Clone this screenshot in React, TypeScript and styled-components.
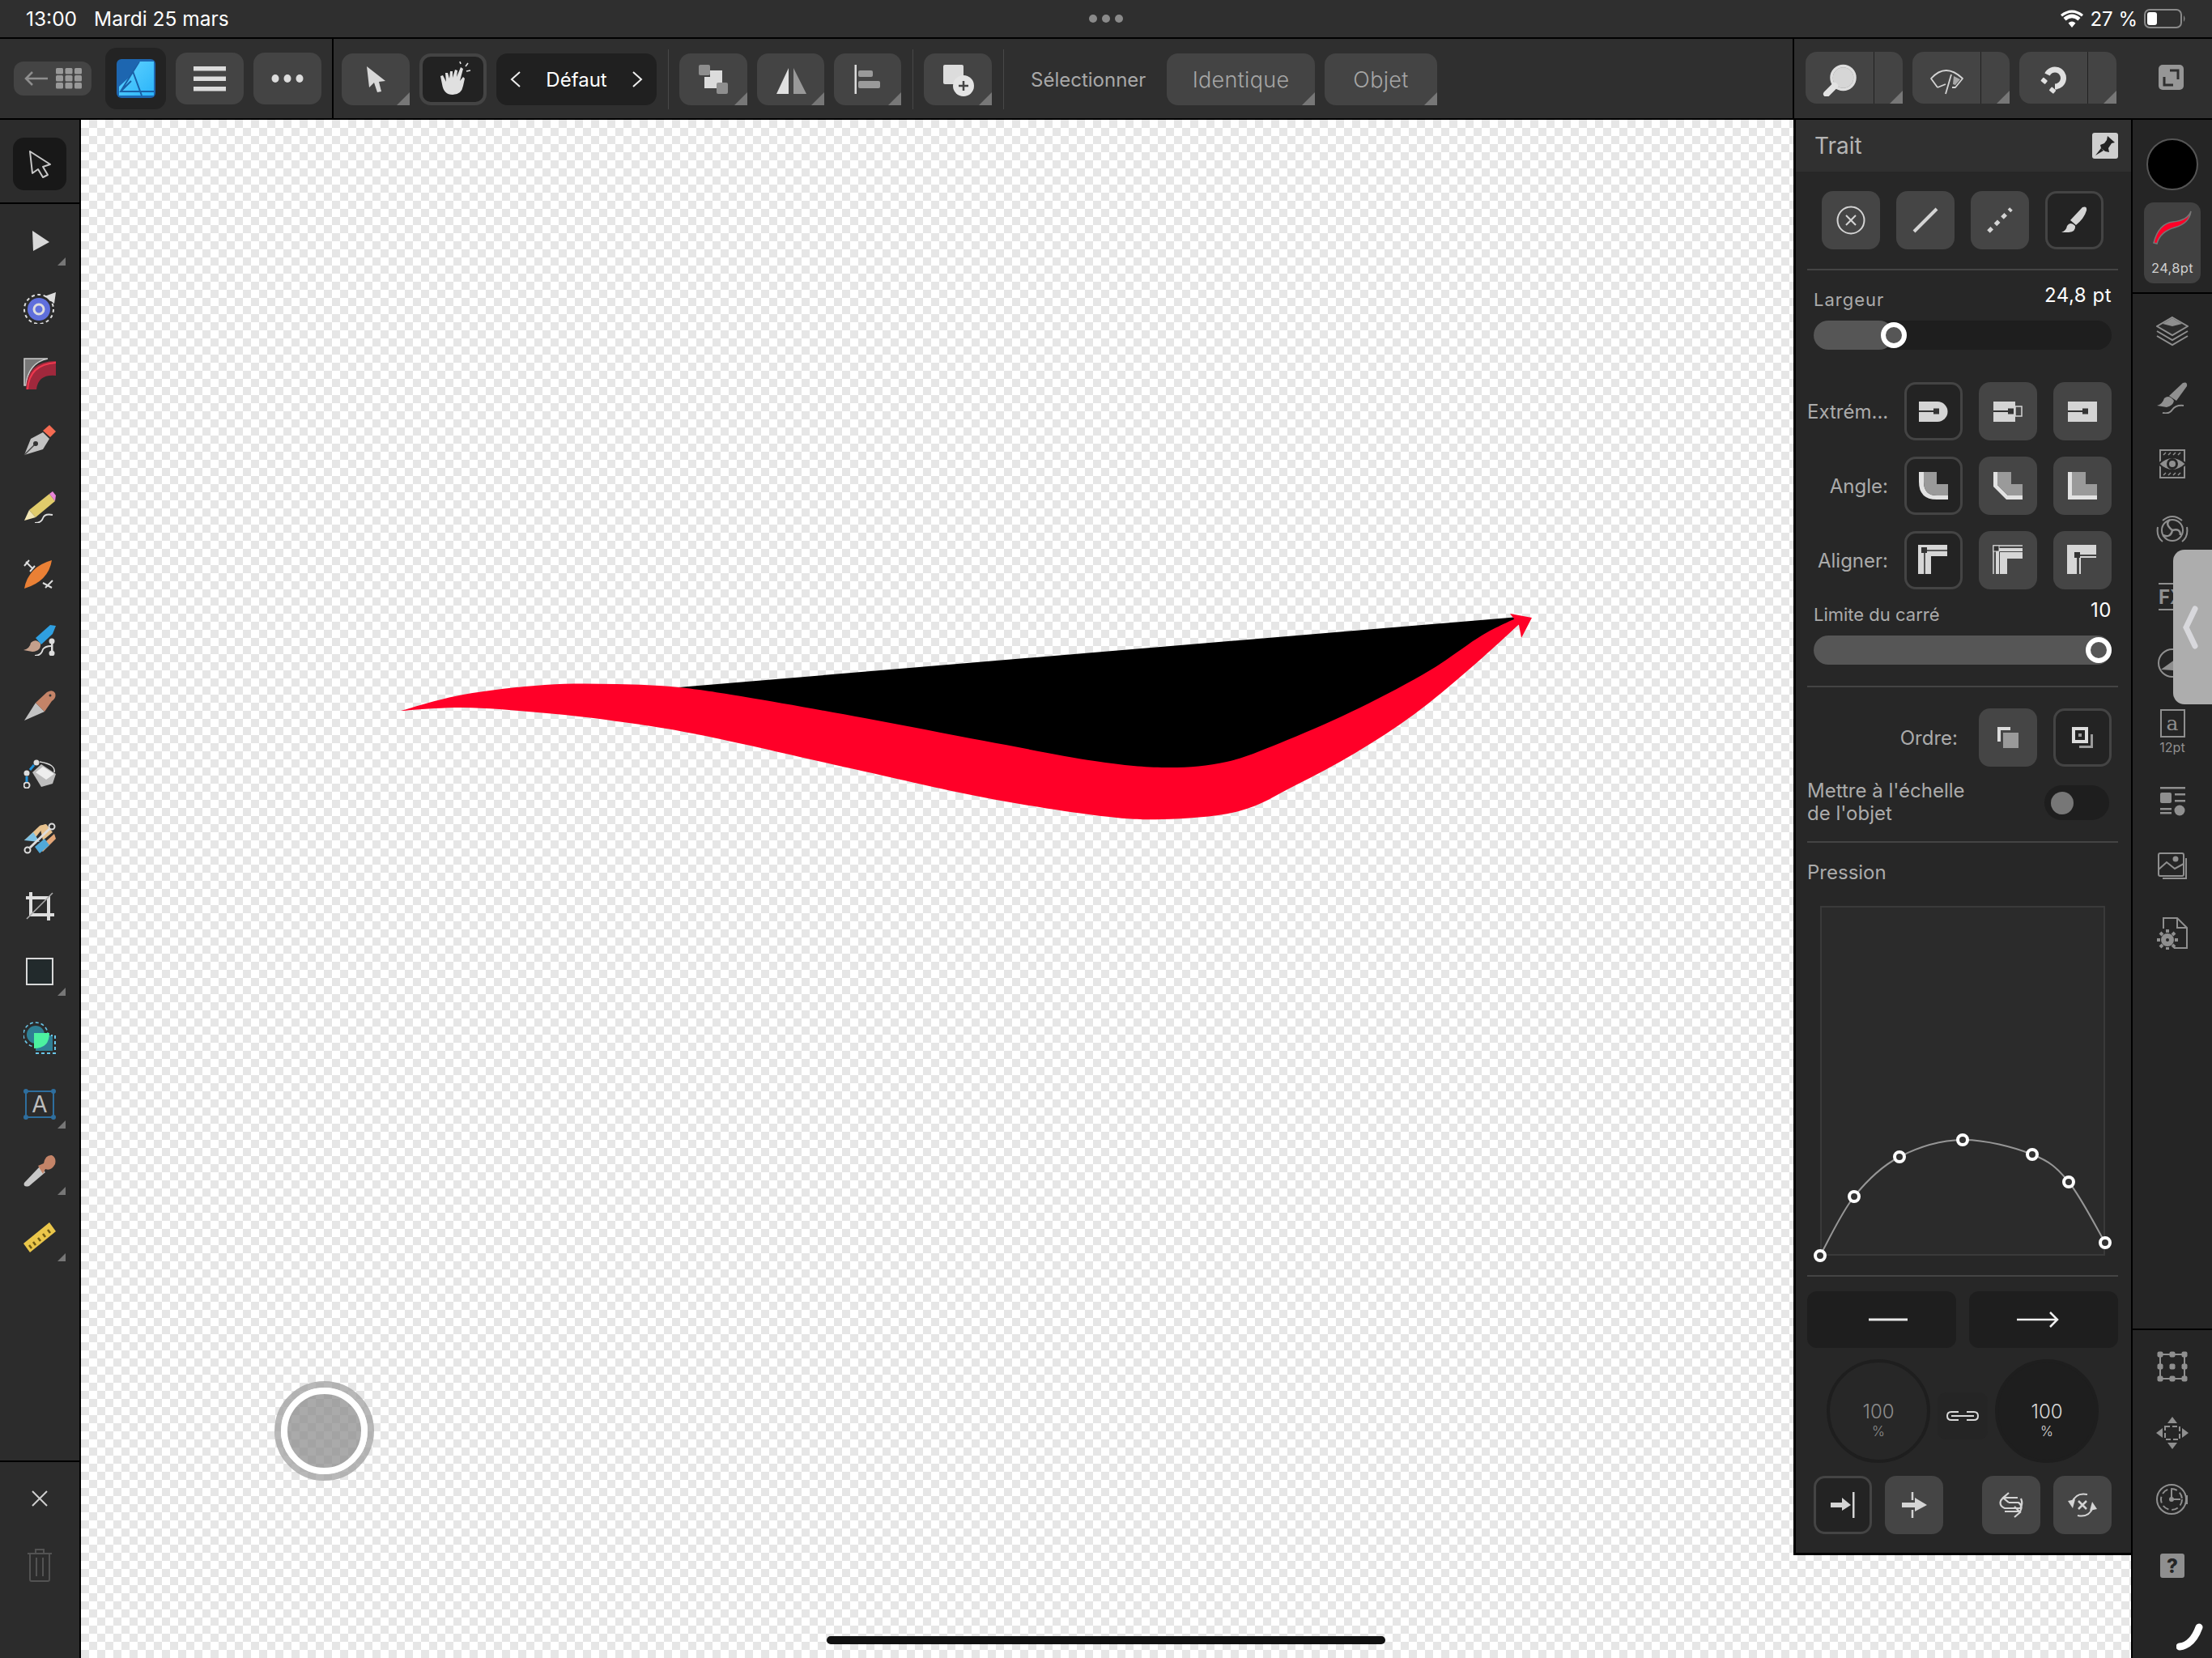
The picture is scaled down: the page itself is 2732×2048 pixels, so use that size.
import React from "react";
import styled, { createGlobalStyle } from "styled-components";

const GlobalStyle = createGlobalStyle`
  html, body { margin: 0; padding: 0; background: #000; }
  * { box-sizing: border-box; }
  button { font: inherit; color: inherit; border: none; padding: 0; }
`;

const Screen = styled.div`
  position: relative;
  width: 2732px;
  height: 2048px;
  overflow: hidden;
  display: flex;
  flex-direction: column;
  font-family: Inter, "Noto Sans", "Liberation Sans", sans-serif;
  color: #fff;
`;

/* status bar */
const StatusBar = styled.div`
  height: 48px;
  flex: none;
  display: grid;
  grid-template-columns: 1fr auto 1fr;
  align-items: center;
  padding: 0 32px;
  background: #2f2f2f;
  border-bottom: 2px solid #000;
  font-size: 24.5px;
`;
const StatusLeft = styled.div`
  display: flex;
  gap: 21px;
`;
const StatusRight = styled.div`
  display: flex;
  align-items: center;
  justify-content: flex-end;
  gap: 8px;
  font-size: 24px;
`;
const Dots = styled.div`
  display: flex;
  gap: 6px;
`;
const Dot = styled.span`
  width: 10px;
  height: 10px;
  border-radius: 50%;
  background: #8a8a8a;
`;

/* toolbar */
const Toolbar = styled.div`
  height: 100px;
  flex: none;
  display: flex;
  background: #2f2f2f;
  border-bottom: 2px solid #000;
`;
const LeadGroup = styled.div`
  width: 412px;
  flex: none;
  display: flex;
  align-items: center;
  padding-left: 17px;
  gap: 12px;
  border-right: 2px solid #000;
`;
const MainGroup = styled.div`
  flex: 1;
  display: flex;
  align-items: center;
  gap: 12px;
  padding: 2px 0 0 10px;
`;
const ViewGroup = styled.div`
  width: 518px;
  flex: none;
  display: flex;
  align-items: center;
  gap: 12px;
  padding: 0 0 2px 14px;
  border-left: 2px solid #000;
`;
const BackPill = styled.div`
  width: 96px;
  height: 42px;
  margin-right: 5px;
  border-radius: 12px;
  background: #444;
  display: flex;
  align-items: center;
  justify-content: center;
  gap: 10px;
`;
const LogoTile = styled.div`
  width: 75px;
  height: 76px;
  border-radius: 14px;
  background: #232323;
  display: flex;
  align-items: center;
  justify-content: center;
`;
const ToolButton = styled.button<{ $w?: number; $selected?: boolean; $more?: boolean }>`
  position: relative;
  width: ${(p) => p.$w ?? 84}px;
  height: 64px;
  flex: none;
  border-radius: ${(p) => (p.$more ? "14px 14px 0 14px" : "14px")};
  background: ${(p) => (p.$selected ? "#222" : "#444")};
  border: ${(p) => (p.$selected ? "4px solid #444" : "none")};
  display: flex;
  align-items: center;
  justify-content: center;
  font-size: 27px;
  font-weight: 300;
  letter-spacing: 0.3px;
  color: #a6a6a6;
  ${(p) =>
    p.$more &&
    `&::after {
      content: "";
      position: absolute;
      right: 0;
      bottom: 0;
      width: 16px;
      height: 16px;
      background: #777;
      clip-path: polygon(100% 0, 100% 100%, 0 100%);
    }`}
`;
const PresetButton = styled.div`
  width: 198px;
  height: 64px;
  flex: none;
  border-radius: 14px;
  background: #202020;
  display: flex;
  align-items: center;
  justify-content: space-between;
  padding: 0 17px;
  font-size: 24px;
`;
const ToolSep = styled.span`
  width: 1px;
  height: 74px;
  margin: 0 1px 0 2px;
  background: #484848;
`;
const ToolLabel = styled.span`
  width: 156px;
  margin: 0 0 0 20px;
  font-size: 24px;
  color: #a8a8a8;
`;
const SplitButton = styled.div`
  position: relative;
  width: 120px;
  height: 64px;
  flex: none;
  display: grid;
  grid-template-columns: 85px 1fr;
  border-radius: 14px 14px 0 14px;
  background: #444;
  &::after {
    content: "";
    position: absolute;
    right: 0;
    bottom: 0;
    width: 16px;
    height: 16px;
    background: #777;
    clip-path: polygon(100% 0, 100% 100%, 0 100%);
  }
`;
const SplitFace = styled.div`
  display: flex;
  align-items: center;
  justify-content: center;
  border-right: 1px solid #222;
`;
const ExpandSlot = styled.div`
  margin-left: 40px;
`;

/* main area */
const Main = styled.div`
  flex: 1;
  display: flex;
  min-height: 0;
`;
const LeftBar = styled.aside`
  width: 100px;
  flex: none;
  display: flex;
  flex-direction: column;
  background: #2c2c2c;
  border-right: 2px solid #000;
`;
const SelectSlot = styled.div`
  height: 104px;
  flex: none;
  padding-top: 22px;
  border-bottom: 2px solid #000;
  display: flex;
  justify-content: center;
  align-items: flex-start;
`;
const SelectTile = styled.div`
  width: 66px;
  height: 65px;
  border-radius: 14px;
  background: #181818;
  display: flex;
  align-items: center;
  justify-content: center;
`;
const ToolList = styled.div`
  flex: 1;
  padding-top: 5px;
`;
const ToolRow = styled.div<{ $more?: boolean }>`
  position: relative;
  height: 82px;
  display: flex;
  align-items: center;
  justify-content: center;
  ${(p) =>
    p.$more &&
    `&::after {
      content: "";
      position: absolute;
      left: 71px;
      top: 61px;
      width: 10px;
      height: 10px;
      background: #777;
      clip-path: polygon(100% 0, 100% 100%, 0 100%);
    }`}
`;
const LeftFooter = styled.div`
  height: 244px;
  flex: none;
  padding-top: 4px;
  border-top: 2px solid #000;
`;

const Canvas = styled.main`
  position: relative;
  flex: 1;
  background: conic-gradient(#e6e6e6 25%, #fff 0 50%, #e6e6e6 0 75%, #fff 0) 0 0 / 20px 20px;
`;
const Artwork = styled.svg`
  position: absolute;
  left: 0;
  top: 0;
  width: 100%;
  height: 100%;
`;
const RecordButton = styled.div`
  position: absolute;
  left: 239px;
  top: 1558px;
  width: 123px;
  height: 123px;
  border-radius: 50%;
  border: 8px solid rgba(160, 160, 160, 0.75);
  display: flex;
  &::before {
    content: "";
    flex: 1;
    border-radius: 50%;
    border: 8px solid #fff;
    background: rgba(137, 137, 137, 0.72);
  }
`;

/* stroke panel */
const Panel = styled.section`
  position: absolute;
  right: 0;
  top: 0;
  width: 417px;
  height: 1773px;
  border-left: 3px solid #000;
  border-bottom: 3px solid #000;
  background: #272727;
  display: flex;
  flex-direction: column;
`;
const PanelHead = styled.header`
  height: 64px;
  flex: none;
  display: flex;
  align-items: center;
  justify-content: space-between;
  padding: 0 16px 0 23px;
  background: #303030;
  font-size: 28px;
  color: #b4b4b4;
`;
const PinTile = styled.div`
  width: 32px;
  height: 32px;
  border-radius: 3px;
  background: #cfcfcf;
  display: flex;
  align-items: center;
  justify-content: center;
`;
const PanelBody = styled.div`
  flex: 1;
  padding: 24px 16px 0 14px;
  display: flex;
  flex-direction: column;
`;
const StyleRow = styled.div`
  display: flex;
  justify-content: center;
  gap: 20px;
`;
const PanelButton = styled.button<{ $active?: boolean }>`
  width: 72px;
  height: 72px;
  flex: none;
  border-radius: 14px;
  background: ${(p) => (p.$active ? "#232323" : "#454545")};
  border: ${(p) => (p.$active ? "3px solid #444" : "none")};
  display: flex;
  align-items: center;
  justify-content: center;
  color: #d4d4d4;
`;
const Rule = styled.hr<{ $top: number }>`
  width: 100%;
  height: 2px;
  margin: ${(p) => p.$top}px 0 0;
  border: none;
  flex: none;
  background: #444;
`;
const SliderHead = styled.div<{ $top: number }>`
  margin-top: ${(p) => p.$top}px;
  height: 46px;
  padding: 0 8px;
  display: flex;
  justify-content: space-between;
  align-items: flex-start;
`;
const FieldLabel = styled.span<{ $track?: number }>`
  font-size: 22px;
  line-height: 40px;
  color: #ababab;
  letter-spacing: ${(p) => p.$track ?? 0}px;
`;
const FieldValue = styled.span`
  font-size: 24px;
  line-height: 30px;
  color: #fff;
  letter-spacing: 0.5px;
`;
const Slider = styled.div`
  position: relative;
  height: 36px;
  margin: 0 8px;
  flex: none;
  border-radius: 18px;
  background: #1e1e1e;
`;
const SliderFill = styled.div`
  height: 100%;
  border-radius: 18px;
  background: #565656;
`;
const SliderThumb = styled.div`
  position: absolute;
  top: 2px;
  width: 32px;
  height: 32px;
  margin-left: -16px;
  border-radius: 50%;
  border: 6px solid #fff;
  background: #565656;
`;
const OptionRow = styled.div<{ $top: number }>`
  margin-top: ${(p) => p.$top}px;
  padding-right: 8px;
  display: grid;
  grid-template-columns: minmax(0, 1fr) repeat(3, 72px);
  column-gap: 20px;
  align-items: center;
`;
const OrderRow = styled(OptionRow)`
  grid-template-columns: minmax(0, 1fr) repeat(2, 72px);
`;
const OptionLabel = styled.span<{ $nudge?: number }>`
  font-size: 24px;
  text-align: right;
  white-space: nowrap;
  color: #ababab;
  margin-right: ${(p) => p.$nudge ?? 0}px;
`;
const ScaleRow = styled.div`
  margin-top: 16px;
  height: 56px;
  padding-right: 11px;
  display: flex;
  align-items: center;
  justify-content: space-between;
`;
const ScaleLabel = styled.span`
  font-size: 24px;
  line-height: 28px;
  color: #ababab;
`;
const Toggle = styled.div`
  width: 80px;
  height: 43px;
  padding: 8px;
  border-radius: 22px;
  background: #1e1e1e;
  &::before {
    content: "";
    display: block;
    width: 28px;
    height: 28px;
    border-radius: 50%;
    background: #777;
  }
`;
const SectionTitle = styled.div`
  margin-top: 22px;
  font-size: 24px;
  line-height: 30px;
  color: #ababab;
`;
const Graph = styled.svg`
  display: block;
  flex: none;
  width: 384px;
  height: 450px;
  margin-top: 16px;
`;
const LineEnds = styled.div`
  margin-top: 18px;
  display: grid;
  grid-template-columns: 1fr 1fr;
  gap: 16px;
`;
const LineEnd = styled.div<{ $shift: number }>`
  height: 70px;
  border-radius: 12px;
  background: #1e1e1e;
  display: flex;
  align-items: center;
  justify-content: center;
  padding-left: ${(p) => (p.$shift > 0 ? p.$shift : 0)}px;
  padding-right: ${(p) => (p.$shift < 0 ? -p.$shift : 0)}px;
`;
const ScaleDials = styled.div`
  margin-top: 14px;
  padding-left: 24px;
  display: flex;
  align-items: center;
  gap: 9px;
`;
const Dial = styled.div<{ $filled?: boolean }>`
  width: 128px;
  height: 128px;
  padding-top: 24px;
  border-radius: 50%;
  border: 4px solid #1e1e1e;
  background: ${(p) => (p.$filled ? "#1e1e1e" : "transparent")};
  color: ${(p) => (p.$filled ? "#d8d8d8" : "#8c8c8c")};
  display: flex;
  flex-direction: column;
  align-items: center;
  justify-content: center;
  font-size: 24px;
  font-weight: 300;
  line-height: 26px;
`;
const DialUnit = styled.span`
  font-size: 17px;
  line-height: 22px;
`;
const LinkTile = styled.div`
  width: 62px;
  height: 58px;
  margin-top: 12px;
  border-radius: 10px;
  background: #252525;
  display: flex;
  align-items: center;
  justify-content: center;
`;
const CapActions = styled.div`
  margin-top: 16px;
  padding: 0 8px;
  display: flex;
  justify-content: space-between;
`;
const CapPair = styled.div`
  display: flex;
  gap: 16px;
`;

/* right rail */
const Rail = styled.aside`
  width: 100px;
  flex: none;
  display: flex;
  flex-direction: column;
  background: #252525;
  border-left: 2px solid #000;
`;
const RailTop = styled.div`
  height: 215px;
  flex: none;
  padding-top: 23px;
  display: flex;
  flex-direction: column;
  align-items: center;
  gap: 15px;
  border-bottom: 2px solid #000;
`;
const Swatch = styled.div`
  width: 64px;
  height: 64px;
  border-radius: 50%;
  background: #000;
  border: 2px solid #555;
`;
const StrokeCard = styled.div`
  width: 70px;
  height: 100px;
  border-radius: 12px;
  background: #414141;
  display: flex;
  flex-direction: column;
  align-items: center;
  padding-top: 10px;
  font-size: 16.5px;
  letter-spacing: 0.3px;
  line-height: 20px;
  color: #d0d0d0;
  gap: 19px;
`;
const RailList = styled.div`
  flex: 1;
  padding-top: 5px;
`;
const RailRow = styled.div<{ $tall?: boolean }>`
  height: ${(p) => (p.$tall ? 88 : 82)}px;
  display: flex;
  flex-direction: column;
  align-items: center;
  justify-content: center;
  color: #8f8f8f;
`;
const LetterBox = styled.div`
  width: 31px;
  height: 35px;
  border: 2px solid #8f8f8f;
  display: flex;
  align-items: center;
  justify-content: center;
  font-family: "DejaVu Serif", "Liberation Serif", serif;
  font-size: 25px;
  line-height: 1;
`;
const LetterSize = styled.span`
  margin-top: 2px;
  font-size: 16px;
  line-height: 20px;
`;
const RailFooter = styled.div`
  height: 407px;
  flex: none;
  padding-top: 4px;
  border-top: 2px solid #000;
`;

/* things lying over the page */
const SideTab = styled.div`
  position: absolute;
  right: 0;
  top: 679px;
  width: 48px;
  height: 191px;
  border-radius: 14px 0 0 14px;
  background: #adadad;
  display: flex;
  align-items: center;
  padding-left: 12px;
`;
const HomeBar = styled.div`
  position: absolute;
  left: 1021px;
  bottom: 17px;
  width: 690px;
  height: 10px;
  border-radius: 5px;
  background: #111;
`;
const PencilMark = styled.svg`
  position: absolute;
  right: 8px;
  bottom: 8px;
  width: 36px;
  height: 36px;
`;

const Glyph = styled.svg<{ $s?: number; $h?: number }>`
  display: block;
  flex: none;
  width: ${(p) => p.$s ?? 40}px;
  height: ${(p) => p.$h ?? p.$s ?? 40}px;
`;

// catmull-rom through the sampled points, for the stroke and the pressure curve
type Pt = [number, number];
function smooth(points: Pt[], move = true) {
  let d = move ? `M${points[0][0]} ${points[0][1]}` : `L${points[0][0]} ${points[0][1]}`;
  for (let i = 0; i < points.length - 1; i++) {
    const p0 = points[Math.max(i - 1, 0)];
    const p1 = points[i];
    const p2 = points[i + 1];
    const p3 = points[Math.min(i + 2, points.length - 1)];
    const c1 = [p1[0] + (p2[0] - p0[0]) / 6, p1[1] + (p2[1] - p0[1]) / 6];
    const c2 = [p2[0] - (p3[0] - p1[0]) / 6, p2[1] - (p3[1] - p1[1]) / 6];
    d += `C${c1[0].toFixed(1)} ${c1[1].toFixed(1)} ${c2[0].toFixed(1)} ${c2[1].toFixed(1)} ${p2[0]} ${p2[1]}`;
  }
  return d;
}

const strokeTop: Pt[] = [
  [495, 878], [572, 858], [673, 846], [760, 845], [838, 849], [921, 861], [1068, 887], [1215, 915],
  [1352, 940], [1440, 948], [1515, 941], [1590, 914], [1680, 874], [1766, 828], [1830, 785], [1876, 762],
];
const strokeBottom: Pt[] = [
  [1885, 763], [1820, 822], [1747, 882], [1674, 930], [1600, 970], [1530, 1002], [1435, 1012], [1352, 1007],
  [1215, 985], [1068, 953], [866, 908], [755, 890], [664, 880], [572, 874], [495, 878],
];
const pressure: Pt[] = [
  [2248, 1552], [2290, 1479], [2346, 1430], [2424, 1409], [2510, 1427], [2555, 1461], [2600, 1536],
];

function AffinityLogo() {
  return (
    <Glyph $s={48} viewBox="0 0 48 48">
      <defs>
        <linearGradient id="aff" x1="0" y1="0" x2="1" y2="1">
          <stop offset="0" stopColor="#62d4ff" />
          <stop offset="1" stopColor="#2ab4fa" />
        </linearGradient>
      </defs>
      <rect width="48" height="48" rx="6" fill="#1d66b0" />
      <path d="M27 3H46V45H3V34L16 22Z" fill="url(#aff)" />
      <path d="M28 3L5 40H46M20 15L31 45M5 40L18 27" fill="none" stroke="#1a5fa6" strokeWidth="2" />
    </Glyph>
  );
}

const leftTools: { more?: boolean; icon: React.ReactNode }[] = [
  {
    more: true,
    icon: <path d="M11 7L32 21 12 32Z" fill="#d8d8d8" />,
  },
  {
    icon: (
      <>
        <circle cx="19" cy="22" r="14" fill="#5f6fdc" />
        <circle cx="19" cy="22" r="6" fill="none" stroke="#ddd" strokeWidth="3" />
        <circle cx="19" cy="22" r="18" fill="none" stroke="#ddd" strokeWidth="2" strokeDasharray="4 3.5" />
        <path d="M26 6L40 1 38 15Z" fill="#ddd" />
      </>
    ),
  },
  {
    icon: (
      <>
        <path d="M1 1H30Q6 6 3 34H1Z" fill="#777" stroke="#ccc" strokeWidth="1.5" />
        <path d="M3 39Q4 4 40 4V22Q18 20 16 39Z" fill="#a0283c" />
        <path d="M5 39Q7 8 40 6" fill="none" stroke="#f0394f" strokeWidth="2" />
      </>
    ),
  },
  {
    icon: (
      <>
        <path d="M24 8L32 1 40 9 33 16Z" fill="#f56b52" />
        <path d="M1 38L9 18 24 10 32 18 24 31Z" fill="#c2c2c2" />
        <path d="M1 38L15 24" stroke="#444" strokeWidth="1.5" />
        <circle cx="15" cy="24" r="3" fill="#333" />
      </>
    ),
  },
  {
    icon: (
      <>
        <path d="M7 24L32 4 39 13 15 33Z" fill="#e0cb6b" />
        <path d="M32 4L36 1 40 6 39 13Z" fill="#e884d8" />
        <path d="M1 37L7 24 15 33Z" fill="#f2e6b4" />
        <path d="M14 40Q22 40 24 34T36 30" fill="none" stroke="#ddd" strokeWidth="1.8" />
      </>
    ),
  },
  {
    icon: (
      <>
        <path d="M1 39Q6 12 35 4 31 30 1 39Z" fill="#ea8035" />
        <path d="M3 6L12 15M1 11L7 4M8 18L14 11M27 38L36 29M24 32L35 38" stroke="#ddd" strokeWidth="2" />
      </>
    ),
  },
  {
    icon: (
      <>
        <path d="M15 18L33 2 40 3 36 13 22 26Z" fill="#2f9fe0" />
        <path d="M0 33Q8 31 9 24 15 18 21 25 22 34 11 35Z" fill="#c4a08c" />
        <path d="M14 40Q22 40 24 32 27 28 34 28" fill="none" stroke="#ddd" strokeWidth="1.8" />
        <circle cx="35" cy="22" r="3.5" fill="#ddd" />
        <circle cx="35" cy="37" r="3.5" fill="#ddd" />
        <rect x="34" y="22" width="2.5" height="15" fill="#ddd" />
      </>
    ),
  },
  {
    icon: (
      <>
        <path d="M1 38L15 16 26 27Z" fill="#c2c2c2" />
        <path d="M15 16L29 3Q36 -1 39 4 41 10 35 14L26 27Z" fill="#c48468" />
        <circle cx="33" cy="7" r="1.5" fill="#333" />
      </>
    ),
  },
  {
    icon: (
      <>
        <path d="M11 20L22 10 40 22 36 34 22 38Z" fill="#bdbdbd" />
        <path d="M15 20L24 13 38 22 28 29Z" fill="#eee" />
        <circle cx="16" cy="8" r="3.5" fill="#ddd" />
        <circle cx="4" cy="21" r="3.5" fill="#ddd" />
        <circle cx="4" cy="36" r="3.5" fill="none" stroke="#ddd" strokeWidth="2" />
        <path d="M8 17L13 11M4 25V32" stroke="#2090d8" strokeWidth="3" />
        <path d="M20 7Q40 10 38 20" fill="none" stroke="#ddd" strokeWidth="1.5" />
      </>
    ),
  },
  {
    icon: (
      <>
        <path d="M1 22L20 4 28 2 20 12 12 22Z" fill="#e7c28e" />
        <path d="M1 22L12 12 20 24Z" fill="#7ec2e4" />
        <path d="M20 4L28 2 36 12 24 22Z" fill="#e7c28e" />
        <path d="M18 32L38 14 40 20 24 36Z" fill="#e2a678" />
        <path d="M14 30L26 20 32 28 20 38Z" fill="#50a8d8" />
        <path d="M8 31L32 8" stroke="#ddd" strokeWidth="3" />
        <circle cx="5" cy="34" r="3.5" fill="#2c2c2c" stroke="#ddd" strokeWidth="2" />
        <circle cx="35" cy="5" r="3.5" fill="#2c2c2c" stroke="#ddd" strokeWidth="2" />
      </>
    ),
  },
  {
    icon: (
      <>
        <path d="M3 11H31V39M9 4V32H38" fill="none" stroke="#dedede" strokeWidth="4" />
        <path d="M4 37L36 5" stroke="#aaa" strokeWidth="1.6" />
      </>
    ),
  },
  {
    more: true,
    icon: <rect x="4" y="4" width="32" height="32" fill="#222a2c" stroke="#d8d8d8" strokeWidth="2" />,
  },
  {
    icon: (
      <>
        <circle cx="15" cy="16" r="11" fill="#2f7f94" />
        <circle cx="15" cy="16" r="15" fill="none" stroke="#69c6e8" strokeWidth="1.6" strokeDasharray="4 3" />
        <rect x="15" y="17" width="21" height="19" fill="#2f7f94" />
        <path d="M15 39H39V17H34" fill="none" stroke="#69c6e8" strokeWidth="2" strokeDasharray="4 3" />
        <path d="M13 14H32Q32 33 13 33Z" fill="#4cf2a0" />
      </>
    ),
  },
  {
    more: true,
    icon: (
      <>
        <rect x="3" y="4" width="34" height="32" fill="none" stroke="#2e6e9e" strokeWidth="2" />
        <circle cx="3" cy="4" r="3" fill="#2e6e9e" />
        <circle cx="37" cy="4" r="3" fill="#2e6e9e" />
        <circle cx="3" cy="36" r="3" fill="#2e6e9e" />
        <circle cx="37" cy="36" r="3" fill="#2e6e9e" />
        <text x="20" y="30" textAnchor="middle" fontSize="28" fill="#bdbdbd" fontFamily="Inter, sans-serif">
          A
        </text>
      </>
    ),
  },
  {
    more: true,
    icon: (
      <>
        <path d="M1 35L20 15 27 22 7 39Q-1 41 1 35Z" fill="#c8c8c8" />
        <path d="M18 14L25 11Q27 0 35 1 41 4 39 12 34 21 27 18L24 24Z" fill="#c48468" />
      </>
    ),
  },
  {
    more: true,
    icon: (
      <>
        <path d="M0 28L32 2 40 13 8 39Z" fill="#eac64a" />
        <path d="M7 30L10 34M12 26L15 30M18 21L21 25M24 16L27 20M30 11L33 15" stroke="#6e5a14" strokeWidth="2.5" />
      </>
    ),
  },
];

const railIcons: React.ReactNode[] = [
  <g fill="none" stroke="currentColor" strokeWidth="2" key="layers">
    <path d="M20 3L39 14 20 25 1 14Z" fill="#2c2c2c" />
    <path d="M8 11L20 4 32 11 20 14Z" fill="currentColor" stroke="none" />
    <path d="M1 20L20 31 39 20M1 26L20 37 39 26" />
  </g>,
  <g fill="currentColor" key="brush">
    <path d="M16 18L33 2Q39 0 38 6L25 24Z" />
    <path d="M1 30Q8 28 10 21 16 16 22 24 21 30 13 32Z" />
    <path d="M8 39Q16 41 20 35T34 30" fill="none" stroke="currentColor" strokeWidth="2" />
  </g>,
  <g fill="none" stroke="currentColor" strokeWidth="2" key="eye">
    <rect x="5" y="3" width="30" height="34" />
    <path d="M3 20Q20 4 37 20 20 36 3 20Z" fill="currentColor" stroke="#252525" />
    <circle cx="20" cy="20" r="7" fill="#252525" stroke="none" />
    <circle cx="20" cy="20" r="4" fill="currentColor" stroke="none" />
    <path d="M9 9l3-3M15 9l3-3M21 9l3-3M27 9l3-3M9 34l3-3M15 34l3-3M21 34l3-3M27 34l3-3" strokeWidth="1.5" />
  </g>,
  <g fill="none" stroke="currentColor" strokeWidth="2" key="aperture">
    <circle cx="20" cy="20" r="13" />
    <path d="M20 20Q10 12 17 7M20 20Q30 17 30 26M20 20Q18 30 8 26" strokeWidth="2.5" />
    <path d="M8 8Q20 -2 32 8M38 16Q40 28 32 34M8 34Q0 28 2 16" />
  </g>,
  <g fill="none" stroke="currentColor" strokeWidth="2" key="fx">
    <path d="M3 4H38M3 36H38" />
    <text x="3" y="29" fontSize="24" fontWeight="700" fill="currentColor" stroke="none" fontFamily="Inter, sans-serif">
      FX
    </text>
  </g>,
  <g key="adjust">
    <circle cx="20" cy="20" r="17" fill="none" stroke="currentColor" strokeWidth="2" />
    <path d="M6 28L34 8V30Z" fill="currentColor" />
  </g>,
];

const railIconsLower: React.ReactNode[] = [
  <g fill="currentColor" key="styles">
    <rect x="5" y="3" width="31" height="2.5" />
    <rect x="5" y="10" width="14" height="13" rx="2" />
    <rect x="23" y="11" width="13" height="2.5" />
    <rect x="23" y="19" width="13" height="2.5" />
    <rect x="5" y="29" width="14" height="2.5" />
    <rect x="5" y="34" width="14" height="2.5" />
    <circle cx="29" cy="32" r="6.5" />
  </g>,
  <g fill="none" stroke="currentColor" strokeWidth="2" key="picture">
    <rect x="3" y="3" width="31" height="28" rx="2" />
    <path d="M37 9V34H8" />
    <path d="M3 23L13 14 23 22 34 16" />
    <circle cx="24" cy="10" r="3.5" fill="currentColor" stroke="none" />
  </g>,
  <g fill="none" stroke="currentColor" strokeWidth="2" key="doc">
    <path d="M9 14V1H26L38 13V38H22M26 1V13H38" />
    <circle cx="14" cy="28" r="5" strokeWidth="6" />
    <path d="M14 15V19M14 37V41M1 28H5M23 28H27M5 19L8 22M23 19L20 22M5 37L8 34M23 37L20 34" strokeWidth="4" />
  </g>,
];

const railFoot: React.ReactNode[] = [
  <g key="box" fill="currentColor">
    <rect x="5" y="5" width="30" height="30" fill="none" stroke="currentColor" strokeWidth="2" />
    {[5, 20, 35].map((x) =>
      [5, 20, 35].map((y) => <rect key={`${x}-${y}`} x={x - 3.5} y={y - 3.5} width="7" height="7" rx="2" />)
    )}
  </g>,
  <g key="move" fill="currentColor">
    <path d="M20 0L26 8H14ZM20 40L14 32H26ZM0 20L8 14V26ZM40 20L32 26V14Z" />
    <rect x="11" y="12" width="18" height="16" fill="none" stroke="currentColor" strokeWidth="2" strokeDasharray="6 3" />
  </g>,
  <g key="clock" fill="none" stroke="currentColor" strokeWidth="2">
    <circle cx="19" cy="20" r="18" />
    <circle cx="19" cy="20" r="13" strokeDasharray="8 4" />
    <path d="M19 8V20H30" />
    <circle cx="19" cy="20" r="3" fill="currentColor" stroke="none" />
    <rect x="36" y="15" width="3" height="11" fill="currentColor" stroke="none" />
  </g>,
  <g key="help">
    <rect x="5" y="5" width="30" height="30" rx="3" fill="currentColor" />
    <text x="20" y="29" textAnchor="middle" fontSize="24" fontWeight="800" fill="#252525" fontFamily="Inter, sans-serif">
      ?
    </text>
  </g>,
];

function CapIcon({ kind }: { kind: "round" | "square" | "butt" }) {
  return (
    <Glyph $s={36} $h={25} viewBox="0 0 36 25">
      {kind === "round" && <path d="M0 0H23a12.5 12.5 0 0 1 0 25H0Z" fill="#d4d4d4" />}
      {kind === "square" && (
        <>
          <rect width="27" height="25" fill="#d4d4d4" />
          <rect x="27" y="6" width="8" height="12" fill="none" stroke="#d4d4d4" strokeWidth="1.5" />
        </>
      )}
      {kind === "butt" && <rect width="36" height="25" fill="#d4d4d4" />}
      <rect y="11" width="20" height="2" fill="#333" />
      <rect x="18" y="8.5" width="7" height="7" fill="#333" />
    </Glyph>
  );
}

function JoinIcon({ kind }: { kind: "round" | "bevel" | "miter" }) {
  const parts = {
    round: ["M0 0H6V12Q6 29 22 29H36V34H22Q0 34 0 12Z", "M6 0H22V15H36V29H22Q6 29 6 12Z"],
    bevel: ["M0 0H5V16L18 29H36V34H16L0 18Z", "M5 0H22V15H36V29H18L5 16Z"],
    miter: ["M0 0H5V29H36V34H0Z", "M5 0H22V15H36V29H5Z"],
  }[kind];
  return (
    <Glyph $s={36} $h={34} viewBox="0 0 36 34">
      <path d={parts[0]} fill="#e2e2e2" />
      <path d={parts[1]} fill="#9a9a9a" />
    </Glyph>
  );
}

function AlignIcon({ kind }: { kind: "center" | "inside" | "outside" }) {
  return (
    <Glyph $s={38} viewBox="0 0 38 38">
      {kind === "center" && (
        <>
          <path d="M0 36V0H36V14H16V36Z" fill="#d6d6d6" />
          <path d="M8 36V7H36" fill="none" stroke="#333" strokeWidth="1.6" />
          <rect x="4" y="3" width="7" height="7" fill="#333" />
        </>
      )}
      {kind === "inside" && (
        <>
          <path d="M1 36V1H37" fill="none" stroke="#d6d6d6" strokeWidth="1.5" />
          <path d="M4 36V4H37V8H8V36Z" fill="#d6d6d6" />
          <path d="M9 36V9H37V17H18V36Z" fill="#d6d6d6" />
          <rect x="1" y="1" width="7" height="7" fill="#333" stroke="#d6d6d6" strokeWidth="1" />
        </>
      )}
      {kind === "outside" && (
        <>
          <path d="M0 36V0H36V12H12V36Z" fill="#d6d6d6" />
          <path d="M16 36V15H36" fill="none" stroke="#d6d6d6" strokeWidth="2" />
          <rect x="9" y="9" width="7" height="7" fill="#333" />
        </>
      )}
    </Glyph>
  );
}

export default function App() {
  return (
    <Screen>
      <GlobalStyle />
      <StatusBar>
        <StatusLeft>
          <span>13:00</span>
          <span>Mardi 25 mars</span>
        </StatusLeft>
        <Dots>
          <Dot />
          <Dot />
          <Dot />
        </Dots>
        <StatusRight>
          <Glyph $s={28} $h={22} viewBox="0 0 28 22">
            <path d="M14 22L9.5 16.5Q14 12.5 18.5 16.5ZM6.5 13.5L3.5 10Q14 1 24.5 10L21.5 13.5Q14 7 6.5 13.5ZM2 8.5L0 6Q14 -5 28 6L26 8.5Q14 -1 2 8.5Z" fill="#fff" />
          </Glyph>
          <span>27 %</span>
          <Glyph $s={52} $h={24} viewBox="0 0 52 24">
            <rect x="1" y="1" width="45" height="22" rx="6" fill="none" stroke="#8a8a8a" strokeWidth="2" />
            <rect x="4" y="4" width="12" height="16" rx="3" fill="#fff" />
            <path d="M49 8Q52 12 49 16Z" fill="#8a8a8a" />
          </Glyph>
        </StatusRight>
      </StatusBar>

      <Toolbar>
        <LeadGroup>
          <BackPill>
            <Glyph $s={29} $h={18} viewBox="0 0 29 18">
              <path d="M29 9H2M10 1L2 9l8 8" fill="none" stroke="#8e8e8e" strokeWidth="2.5" />
            </Glyph>
            <Glyph $s={32} $h={26} viewBox="0 0 32 26" fill="#999">
              {[0, 11.5, 23].map((x) =>
                [0, 9, 18].map((y) => <rect key={`${x}-${y}`} x={x} y={y} width="9" height="7.5" rx="1.5" />)
              )}
            </Glyph>
          </BackPill>
          <LogoTile>
            <AffinityLogo />
          </LogoTile>
          <ToolButton>
            <Glyph $s={42} viewBox="0 0 42 42" fill="#dcdcdc">
              <rect x="1" y="6" width="40" height="5.5" />
              <rect x="1" y="18.5" width="40" height="5.5" />
              <rect x="1" y="31" width="40" height="5.5" />
            </Glyph>
          </ToolButton>
          <ToolButton>
            <Glyph $s={42} viewBox="0 0 42 42" fill="#dcdcdc">
              <ellipse cx="6" cy="21" rx="4.5" ry="5" />
              <ellipse cx="21" cy="21" rx="4.5" ry="5" />
              <ellipse cx="36" cy="21" rx="4.5" ry="5" />
            </Glyph>
          </ToolButton>
        </LeadGroup>

        <MainGroup>
          <ToolButton $more>
            <Glyph $s={34} viewBox="0 0 34 34">
              <path d="M6 1L29 19 21 20 24 32 19 33 15 21 9 27Z" fill="#d8d8d8" />
            </Glyph>
          </ToolButton>
          <ToolButton $w={83} $selected>
            <Glyph $s={44} viewBox="0 0 44 44">
              <path d="M6 18L8 28Q10 41 21 41 32 41 34 30L36 21 34 19 30 24 34 9 31 7 26 19 27 11 24 10 21 20 21 12 18 12 17 21 15 14 12 14 13 25 9 17Z" fill="#e0e0e0" />
              <path d="M31 3L30 0M37 6L40 2M38 12L43 11" stroke="#e0e0e0" strokeWidth="1.6" />
            </Glyph>
          </ToolButton>
          <PresetButton>
            <Glyph $s={14} $h={20} viewBox="0 0 14 20">
              <path d="M12 1L2 10l10 9" fill="none" stroke="#eee" strokeWidth="2" />
            </Glyph>
            <span>Défaut</span>
            <Glyph $s={14} $h={20} viewBox="0 0 14 20">
              <path d="M2 1l10 9-10 9" fill="none" stroke="#eee" strokeWidth="2" />
            </Glyph>
          </PresetButton>
          <ToolSep />
          <ToolButton $more>
            <Glyph $s={44} viewBox="0 0 44 44">
              <rect x="4" y="4" width="14" height="13" rx="2" fill="#8e8e8e" />
              <path d="M18 11H33V28H26V33H11V19H18Z" fill="#dcdcdc" />
              <rect x="26" y="26" width="14" height="14" rx="2" fill="#8e8e8e" />
            </Glyph>
          </ToolButton>
          <ToolButton $w={83} $more>
            <Glyph $s={44} viewBox="0 0 44 44">
              <path d="M4 40L19 8V40Z" fill="#e0e0e0" />
              <path d="M25 8L41 40H25Z" fill="#999" />
            </Glyph>
          </ToolButton>
          <ToolButton $w={83} $more>
            <Glyph $s={44} viewBox="0 0 44 44">
              <rect x="5.5" y="4" width="2.5" height="36" fill="#dcdcdc" />
              <rect x="10" y="11" width="18" height="8" rx="2" fill="#9a9a9a" />
              <rect x="10" y="24" width="27" height="9" rx="2" fill="#9a9a9a" />
            </Glyph>
          </ToolButton>
          <ToolSep />
          <ToolButton $more>
            <Glyph $s={44} viewBox="0 0 44 44">
              <rect x="4" y="4" width="25" height="24" rx="2" fill="#dcdcdc" />
              <circle cx="29" cy="30" r="13" fill="#e4e4e4" />
              <path d="M29 24V36M23 30H35" stroke="#444" strokeWidth="2.5" />
            </Glyph>
          </ToolButton>
          <ToolSep />
          <ToolLabel>Sélectionner</ToolLabel>
          <ToolButton $w={183} $more>
            Identique
          </ToolButton>
          <ToolButton $w={139} $more>
            Objet
          </ToolButton>
        </MainGroup>

        <ViewGroup>
          <SplitButton>
            <SplitFace>
              <Glyph $s={46} viewBox="0 0 46 46">
                <circle cx="27.5" cy="23" r="13.5" fill="#d6d6d6" stroke="#777" strokeWidth="1.5" />
                <circle cx="27.5" cy="23" r="14.5" fill="none" stroke="#dedede" strokeWidth="3.5" />
                <path d="M17 33L7 43" stroke="#e2e2e2" strokeWidth="8" strokeLinecap="round" />
              </Glyph>
            </SplitFace>
          </SplitButton>
          <SplitButton>
            <SplitFace>
              <Glyph $s={44} viewBox="0 0 44 44">
                <path d="M11 34L3 23Q21 3 42 23L33 34H29M11 34L21 30" fill="none" stroke="#d4d4d4" strokeWidth="1.8" strokeLinejoin="round" />
                <path d="M28 18L21 42" stroke="#d4d4d4" strokeWidth="1.8" />
                <path d="M31 20L39 24 33 31 30 30Z" fill="#a8a8a8" />
              </Glyph>
            </SplitFace>
          </SplitButton>
          <SplitButton>
            <SplitFace>
              <Glyph $s={44} viewBox="0 0 44 44">
                <path d="M14.5 18A10.5 10.5 0 1 1 24 33" fill="none" stroke="#e0e0e0" strokeWidth="7" />
                <rect x="7" y="23" width="7" height="5.5" rx="1" fill="#e0e0e0" transform="rotate(40 10.5 26)" />
                <rect x="18" y="35" width="7" height="5.5" rx="1" fill="#e0e0e0" transform="rotate(40 21.5 37)" />
              </Glyph>
            </SplitFace>
          </SplitButton>
          <ExpandSlot>
            <Glyph $s={32} viewBox="0 0 32 32">
              <rect width="31" height="31" rx="5" fill="#969696" />
              <path d="M14 7H24V18M7 15V25H18" fill="none" stroke="#2f2f2f" strokeWidth="3" />
            </Glyph>
          </ExpandSlot>
        </ViewGroup>
      </Toolbar>

      <Main>
        <LeftBar>
          <SelectSlot>
            <SelectTile>
              <Glyph $s={40} viewBox="0 0 40 40">
                <path d="M8 4L33 20 24 23 30 33 24 36 18 26 11 31Z" fill="#1b1b1b" stroke="#c8c8c8" strokeWidth="2" strokeLinejoin="round" />
              </Glyph>
            </SelectTile>
          </SelectSlot>
          <ToolList>
            {leftTools.map((tool, i) => (
              <ToolRow key={i} $more={tool.more}>
                <Glyph viewBox="0 0 40 40">{tool.icon}</Glyph>
              </ToolRow>
            ))}
          </ToolList>
          <LeftFooter>
            <ToolRow>
              <Glyph $s={22} viewBox="0 0 22 22">
                <path d="M2 2L20 20M20 2L2 20" stroke="#cfcfcf" strokeWidth="2" />
              </Glyph>
            </ToolRow>
            <ToolRow>
              <Glyph $s={32} $h={42} viewBox="0 0 32 42">
                <path d="M1 7H31M11 6V2H21V6M4 8V39Q4 41 6 41H26Q28 41 28 39V8M12 12V35M20 12V35" fill="none" stroke="#525252" strokeWidth="2" />
              </Glyph>
            </ToolRow>
          </LeftFooter>
        </LeftBar>

        <Canvas>
          <Artwork viewBox="100 148 2532 1900">
            <path d="M838 849L1876 762L1800 825L1674 905L1500 970L1352 975L1215 950L1068 920L921 880Z" fill="#000" />
            <path d={`${smooth(strokeTop)}${smooth(strokeBottom, false)}Z`} fill="#ff0028" />
            <path d="M1865 758L1892 763 1879 788 1876 772Z" fill="#ff0028" />
          </Artwork>
          <RecordButton />
          <Panel>
            <PanelHead>
              <span>Trait</span>
              <PinTile>
                <Glyph $s={26} viewBox="0 0 26 26">
                  <path d="M16 1L25 9 21 10 17 16 18 21 13 20 8 16 7 12 12 10 15 6ZM8 16L1 25 11 19Z" fill="#222" />
                </Glyph>
              </PinTile>
            </PanelHead>
            <PanelBody>
              <StyleRow>
                <PanelButton>
                  <Glyph $s={36} viewBox="0 0 36 36">
                    <circle cx="18" cy="18" r="16.5" fill="none" stroke="#d4d4d4" strokeWidth="2" />
                    <path d="M12 12L24 24M24 12L12 24" stroke="#d4d4d4" strokeWidth="2" />
                  </Glyph>
                </PanelButton>
                <PanelButton>
                  <Glyph $s={32} viewBox="0 0 32 32">
                    <path d="M2 30L30 2" stroke="#d4d4d4" strokeWidth="4" />
                  </Glyph>
                </PanelButton>
                <PanelButton>
                  <Glyph $s={32} viewBox="0 0 32 32">
                    <path d="M2 30L30 2" stroke="#d4d4d4" strokeWidth="5" strokeDasharray="6 6" />
                  </Glyph>
                </PanelButton>
                <PanelButton $active>
                  <Glyph $s={34} viewBox="0 0 34 34">
                    <path d="M12 17L27 1Q33 -1 32 5 29 15 19 23Z" fill="#d4d4d4" />
                    <path d="M1 32Q7 30 8 24 12 18 18 24 19 31 10 32Z" fill="#d4d4d4" />
                  </Glyph>
                </PanelButton>
              </StyleRow>
              <Rule $top={24} />
              <SliderHead $top={16}>
                <FieldLabel $track={1}>Largeur</FieldLabel>
                <FieldValue>24,8 pt</FieldValue>
              </SliderHead>
              <Slider>
                <SliderFill style={{ width: "27%" }} />
                <SliderThumb style={{ left: "27%" }} />
              </Slider>
              <OptionRow $top={40}>
                <OptionLabel>Extrém...</OptionLabel>
                <PanelButton $active>
                  <CapIcon kind="round" />
                </PanelButton>
                <PanelButton>
                  <CapIcon kind="square" />
                </PanelButton>
                <PanelButton>
                  <CapIcon kind="butt" />
                </PanelButton>
              </OptionRow>
              <OptionRow $top={20}>
                <OptionLabel>Angle:</OptionLabel>
                <PanelButton $active>
                  <JoinIcon kind="round" />
                </PanelButton>
                <PanelButton>
                  <JoinIcon kind="bevel" />
                </PanelButton>
                <PanelButton>
                  <JoinIcon kind="miter" />
                </PanelButton>
              </OptionRow>
              <OptionRow $top={20}>
                <OptionLabel>Aligner:</OptionLabel>
                <PanelButton $active>
                  <AlignIcon kind="center" />
                </PanelButton>
                <PanelButton>
                  <AlignIcon kind="inside" />
                </PanelButton>
                <PanelButton>
                  <AlignIcon kind="outside" />
                </PanelButton>
              </OptionRow>
              <SliderHead $top={11}>
                <FieldLabel>Limite du carré</FieldLabel>
                <FieldValue>10</FieldValue>
              </SliderHead>
              <Slider>
                <SliderFill style={{ width: "100%" }} />
                <SliderThumb style={{ left: "95.6%" }} />
              </Slider>
              <Rule $top={26} />
              <OrderRow $top={26}>
                <OptionLabel $nudge={6}>Ordre:</OptionLabel>
                <PanelButton>
                  <Glyph $s={28} viewBox="0 0 28 28">
                    <path d="M1 1H17V5H5V19H1Z" fill="#dcdcdc" />
                    <rect x="8" y="8" width="19" height="19" fill="#9a9a9a" />
                  </Glyph>
                </PanelButton>
                <PanelButton $active>
                  <Glyph $s={28} viewBox="0 0 28 28">
                    <path d="M24 10H27V27H10V24H24Z" fill="#9a9a9a" />
                    <rect x="3" y="3" width="16" height="16" fill="none" stroke="#dcdcdc" strokeWidth="4" />
                    <rect x="9" y="9" width="4" height="4" fill="#9a9a9a" />
                  </Glyph>
                </PanelButton>
              </OrderRow>
              <ScaleRow>
                <ScaleLabel>
                  Mettre à l'échelle
                  <br />
                  de l'objet
                </ScaleLabel>
                <Toggle />
              </ScaleRow>
              <Rule $top={20} />
              <SectionTitle>Pression</SectionTitle>
              <Graph viewBox="2232 1110 384 450">
                <rect x="2249" y="1121" width="350" height="430" fill="#2b2b2b" stroke="#3a3a3a" strokeWidth="2" />
                <path d={smooth(pressure)} fill="none" stroke="#969696" strokeWidth="2" />
                {pressure.map(([x, y]) => (
                  <circle key={x} cx={x} cy={y} r="6" fill="#333" stroke="#fff" strokeWidth="4" />
                ))}
              </Graph>
              <Rule $top={16} />
              <LineEnds>
                <LineEnd $shift={16}>
                  <Glyph $s={48} $h={20} viewBox="0 0 48 20">
                    <path d="M0 10H48" stroke="#e8e8e8" strokeWidth="3" />
                  </Glyph>
                </LineEnd>
                <LineEnd $shift={-14}>
                  <Glyph $s={52} $h={20} viewBox="0 0 52 20">
                    <path d="M0 10H50M41 1l9 9-9 9" fill="none" stroke="#f0f0f0" strokeWidth="2.5" />
                  </Glyph>
                </LineEnd>
              </LineEnds>
              <ScaleDials>
                <Dial>
                  100
                  <DialUnit>%</DialUnit>
                </Dial>
                <LinkTile>
                  <Glyph $s={40} $h={14} viewBox="0 0 40 14">
                    <path d="M15 2H6Q1 2 1 7T6 12H15M25 2H34Q39 2 39 7T34 12H25M6 7H34" fill="none" stroke="#d8d8d8" strokeWidth="2" />
                  </Glyph>
                </LinkTile>
                <Dial $filled>
                  100
                  <DialUnit>%</DialUnit>
                </Dial>
              </ScaleDials>
              <CapActions>
                <CapPair>
                  <PanelButton $active>
                    <Glyph $s={32} viewBox="0 0 32 32">
                      <path d="M1 13H15V7L26 16 15 23V19H1Z" fill="#d4d4d4" />
                      <rect x="28" y="0" width="2.5" height="32" fill="#d4d4d4" />
                    </Glyph>
                  </PanelButton>
                  <PanelButton>
                    <Glyph $s={32} viewBox="0 0 32 32">
                      <path d="M1 13H17V7L32 16 17 24V19H1Z" fill="#d4d4d4" />
                      <path d="M14 0V32" stroke="#d4d4d4" strokeWidth="2.5" strokeDasharray="10 12" />
                    </Glyph>
                  </PanelButton>
                </CapPair>
                <CapPair>
                  <PanelButton>
                    <Glyph $s={32} viewBox="0 0 32 32">
                      <path d="M28 8Q31 15 27 20H8Q1 17 3 11 5 6 12 7H24M13 13H25Q31 17 27 24H8M13 1L6 7 13 13M20 18L27 25 20 31" fill="none" stroke="#d4d4d4" strokeWidth="2.2" />
                    </Glyph>
                  </PanelButton>
                  <PanelButton>
                    <Glyph $s={40} viewBox="0 0 40 40">
                      <path d="M7 17Q12 4 26 7M33 23Q28 36 14 33" fill="none" stroke="#d4d4d4" strokeWidth="2" />
                      <path d="M2 15L11 13 8 24ZM38 25L29 27 32 16Z" fill="#d4d4d4" />
                      <path d="M15 15L25 25M25 15L15 25" stroke="#d4d4d4" strokeWidth="2.5" />
                    </Glyph>
                  </PanelButton>
                </CapPair>
              </CapActions>
            </PanelBody>
          </Panel>
        </Canvas>

        <Rail>
          <RailTop>
            <Swatch />
            <StrokeCard>
              <Glyph $s={50} $h={42} viewBox="0 0 50 42">
                <path d="M2 40Q8 16 26 14T48 1Q46 16 28 21T6 41Z" fill="#ff0028" stroke="#777" strokeWidth="1.5" />
              </Glyph>
              <span>24,8pt</span>
            </StrokeCard>
          </RailTop>
          <RailList>
            {railIcons.map((icon, i) => (
              <RailRow key={i}>
                <Glyph viewBox="0 0 40 40">{icon}</Glyph>
              </RailRow>
            ))}
            <RailRow $tall>
              <LetterBox>a</LetterBox>
              <LetterSize>12pt</LetterSize>
            </RailRow>
            {railIconsLower.map((icon, i) => (
              <RailRow key={i}>
                <Glyph viewBox="0 0 40 40">{icon}</Glyph>
              </RailRow>
            ))}
          </RailList>
          <RailFooter>
            {railFoot.map((icon, i) => (
              <RailRow key={i}>
                <Glyph viewBox="0 0 40 40">{icon}</Glyph>
              </RailRow>
            ))}
          </RailFooter>
        </Rail>
      </Main>

      <SideTab>
        <Glyph $s={20} $h={54} viewBox="0 0 20 54">
          <path d="M15 4L4 27l11 23" fill="none" stroke="#d8d8dc" strokeWidth="7" strokeLinecap="round" />
        </Glyph>
      </SideTab>
      <HomeBar />
      <PencilMark viewBox="0 0 36 36">
        <path d="M4 30Q20 28 28 6" fill="none" stroke="#fff" strokeWidth="9" strokeLinecap="round" />
      </PencilMark>
    </Screen>
  );
}
